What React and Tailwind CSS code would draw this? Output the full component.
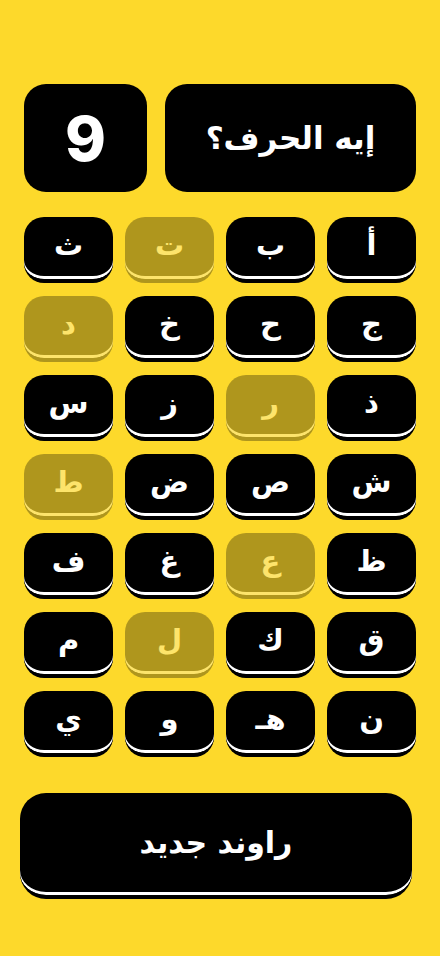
const letters = [
  { ch: "أ" }, { ch: "ب" }, { ch: "ت", used: true }, { ch: "ث" },
  { ch: "ج" }, { ch: "ح" }, { ch: "خ" }, { ch: "د", used: true },
  { ch: "ذ" }, { ch: "ر", used: true }, { ch: "ز" }, { ch: "س" },
  { ch: "ش" }, { ch: "ص" }, { ch: "ض" }, { ch: "ط", used: true },
  { ch: "ظ" }, { ch: "ع", used: true }, { ch: "غ" }, { ch: "ف" },
  { ch: "ق" }, { ch: "ك" }, { ch: "ل", used: true }, { ch: "م" },
  { ch: "ن" }, { ch: "هـ" }, { ch: "و" }, { ch: "ي" },
];

const arabic = "font-['DejaVu_Sans','Noto_Sans',sans-serif]";

const Key = ({ letter }) => (
  <button
    className={`h-[66px] rounded-[20px] bg-black border-b-4 border-black shadow-[inset_0_-3px_0_#ffffff] flex items-center justify-center pb-1 text-white text-[29px] font-bold ${arabic} ${
      letter.used ? "opacity-30" : ""
    }`}
  >
    {letter.ch}
  </button>
);

export default function App() {
  return (
    <div className="min-h-[956px] w-[440px] bg-[#fdd92b] pt-[84px]">
      {/* header: question + score */}
      <div dir="rtl" className="flex gap-[18px] px-6">
        <div className={`w-[251px] h-[108px] rounded-[22px] bg-black flex items-center justify-center text-white text-[31px] font-bold ${arabic}`}>
          إيه الحرف؟
        </div>
        <div className="w-[123px] h-[108px] rounded-[22px] bg-black flex items-center justify-center text-white text-[62px] font-extrabold font-['Inter','Liberation_Sans',sans-serif]">
          9
        </div>
      </div>

      {/* letters grid */}
      <div dir="rtl" className="grid grid-cols-4 gap-x-3 gap-y-[13px] px-6 mt-[25px]">
        {letters.map((l) => (
          <Key key={l.ch} letter={l} />
        ))}
      </div>

      {/* new round */}
      <button
        className={`mt-[36px] ml-5 w-[392px] h-[106px] rounded-[26px] bg-black border-b-4 border-black shadow-[inset_0_-3px_0_#ffffff] flex items-center justify-center pb-1 text-white text-[30px] font-bold ${arabic}`}
      >
        راوند جديد
      </button>
    </div>
  );
}
